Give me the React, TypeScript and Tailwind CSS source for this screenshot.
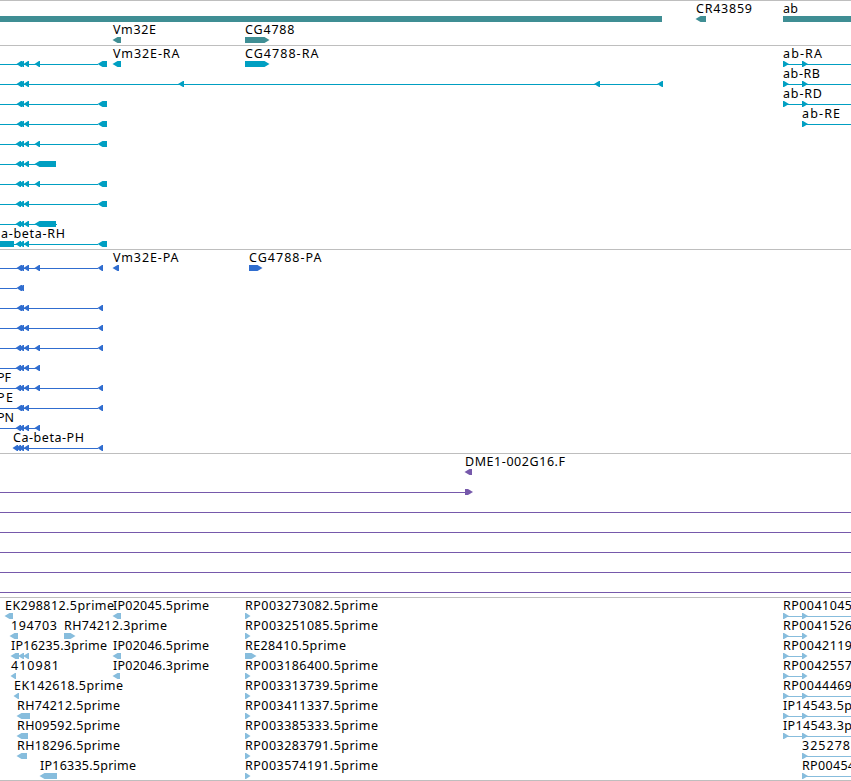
type Dir = 'l' | 'r' | 'box'

// start, end, direction
type Shape = [number, number, Dir]

interface Feature {
  lane: number
  label?: string
  labelX?: number
  labelWidth?: number
  line?: [number, number]
  shapes?: Shape[]
}

interface TrackData {
  name: string
  color: string
  height: number
  pitch?: number
  features: Feature[]
}

const WIDTH = 851

const NEAR: Shape[] = [[16.5, 22, 'l'], [18.5, 24, 'l'], [23.5, 29, 'l']]
const FAR: Shape[] = [[15.5, 21, 'l'], [18.5, 24, 'l'], [23.5, 29, 'l']]
const EXON: Shape = [34.5, 40, 'l']
const LONG_EXON: Shape = [34.5, 56, 'l']
const RNA_END: Shape = [97.5, 107, 'l']
const CDS_END: Shape = [97.5, 103, 'l']
const AB: Shape[] = [[783, 789, 'r'], [802, 808, 'r']]

const TRACKS: TrackData[] = [
  {
    name: 'genes',
    color: '#3f8e94',
    height: 44,
    pitch: 21,
    features: [
      { lane: 0, shapes: [[0, 662, 'box']] },
      { lane: 0, label: 'CR43859', labelX: 696, labelWidth: 56, shapes: [[695.5, 706, 'l']] },
      { lane: 0, label: 'ab', labelX: 783, labelWidth: 15, shapes: [[783, 851, 'box']] },
      { lane: 1, label: 'Vm32E', labelX: 113, labelWidth: 43, shapes: [[112.5, 121, 'l']] },
      { lane: 1, label: 'CG4788', labelX: 245, labelWidth: 49.5, shapes: [[245, 269.5, 'r']] },
    ],
  },
  {
    name: 'transcripts',
    color: '#009fc2',
    height: 203,
    features: [
      { lane: 0, line: [0, 98], shapes: [...NEAR, EXON, RNA_END] },
      { lane: 0, label: 'Vm32E-RA', labelX: 113, labelWidth: 66.5, shapes: [[112.5, 121, 'l']] },
      { lane: 0, label: 'CG4788-RA', labelX: 245, labelWidth: 73.5, shapes: [[245, 269.5, 'r']] },
      { lane: 0, label: 'ab-RA', labelX: 783, labelWidth: 39, line: [783, 851], shapes: AB },
      { lane: 1, line: [0, 658], shapes: [...NEAR, [178, 184, 'l'], [594, 600, 'l'], [657, 663, 'l']] },
      { lane: 1, label: 'ab-RB', labelX: 783, labelWidth: 37, line: [783, 851], shapes: AB },
      { lane: 2, line: [0, 98], shapes: [...NEAR, RNA_END] },
      { lane: 2, label: 'ab-RD', labelX: 783, labelWidth: 39, line: [783, 851], shapes: AB },
      { lane: 3, line: [0, 98], shapes: [...NEAR, RNA_END] },
      { lane: 3, label: 'ab-RE', labelX: 802, labelWidth: 38, line: [802, 851], shapes: [[802, 808, 'r']] },
      { lane: 4, line: [0, 98], shapes: [...FAR, EXON, RNA_END] },
      { lane: 5, line: [0, 36], shapes: [...FAR, LONG_EXON] },
      { lane: 6, line: [0, 98], shapes: [...FAR, EXON, RNA_END] },
      { lane: 7, line: [0, 98], shapes: [...FAR, RNA_END] },
      { lane: 8, line: [0, 57], shapes: [...FAR, LONG_EXON] },
      { lane: 9, label: 'a-beta-RH', labelX: 1, labelWidth: 64, line: [0, 98], shapes: [[0, 14, 'box'], ...FAR, RNA_END] },
    ],
  },
  {
    name: 'proteins',
    color: '#306dcf',
    height: 203,
    features: [
      { lane: 0, line: [0, 98], shapes: [...NEAR, EXON, CDS_END] },
      { lane: 0, label: 'Vm32E-PA', labelX: 113, labelWidth: 65.5, shapes: [[112.5, 119, 'l']] },
      { lane: 0, label: 'CG4788-PA', labelX: 249, labelWidth: 72.5, shapes: [[249, 262.5, 'r']] },
      { lane: 1, line: [0, 17], shapes: [[16.5, 22, 'l'], [18.5, 24, 'l']] },
      { lane: 2, line: [0, 98], shapes: [...NEAR, CDS_END] },
      { lane: 3, line: [0, 98], shapes: [...NEAR, CDS_END] },
      { lane: 4, line: [0, 98], shapes: [...FAR, EXON, CDS_END] },
      { lane: 5, line: [0, 36], shapes: [...FAR, EXON] },
      { lane: 6, label: 'PF', labelX: -3, labelWidth: 14, line: [0, 98], shapes: [...FAR, EXON, CDS_END] },
      { lane: 7, label: 'PE', labelX: -3, labelWidth: 16, line: [0, 98], shapes: [...NEAR, CDS_END] },
      { lane: 8, label: 'PN', labelX: -3, labelWidth: 17, line: [0, 36], shapes: [...FAR, EXON] },
      { lane: 9, label: 'Ca-beta-PH', labelX: 13, labelWidth: 71, line: [16, 98], shapes: [[12.5, 18, 'l'], ...FAR, CDS_END] },
    ],
  },
  {
    name: 'bac ends',
    color: '#7659ab',
    height: 143,
    features: [
      { lane: 0, label: 'DME1-002G16.F', labelX: 465, labelWidth: 100, shapes: [[464.5, 472, 'l']] },
      { lane: 1, line: [0, 466], shapes: [[465, 473, 'r']] },
      { lane: 2, line: [0, 851] },
      { lane: 3, line: [0, 851] },
      { lane: 4, line: [0, 851] },
      { lane: 5, line: [0, 851] },
      { lane: 6, line: [0, 851] },
    ],
  },
  {
    name: 'ests',
    color: '#87bddd',
    height: 182,
    features: [
      { lane: 0, label: 'EK298812.5prime', labelX: 5, labelWidth: 109, shapes: [[4.5, 13, 'l']] },
      { lane: 0, label: 'IP02045.5prime', labelX: 113, labelWidth: 96, shapes: [[112.5, 121, 'l']] },
      { lane: 1, label: '194703', labelX: 11, labelWidth: 46, shapes: [[9.5, 18, 'l']] },
      { lane: 1, label: 'RH74212.3prime', labelX: 64, labelWidth: 103, shapes: [[64, 75.5, 'r']] },
      { lane: 2, label: 'IP16235.3prime', labelX: 11, labelWidth: 96, shapes: [[10.5, 19, 'l'], [18, 24, 'l'], [23, 29, 'l']] },
      { lane: 2, label: 'IP02046.5prime', labelX: 113, labelWidth: 96, shapes: [[112.5, 121, 'l']] },
      { lane: 3, label: '410981', labelX: 11, labelWidth: 48, shapes: [[10.5, 16, 'l']] },
      { lane: 3, label: 'IP02046.3prime', labelX: 113, labelWidth: 96, shapes: [[112.5, 120, 'l']] },
      { lane: 4, label: 'EK142618.5prime', labelX: 14, labelWidth: 109, shapes: [[13.5, 19, 'l']] },
      { lane: 5, label: 'RH74212.5prime', labelX: 17, labelWidth: 103, shapes: [[16.5, 30, 'l']] },
      { lane: 6, label: 'RH09592.5prime', labelX: 17, labelWidth: 103, shapes: [[16.5, 28, 'l']] },
      { lane: 7, label: 'RH18296.5prime', labelX: 17, labelWidth: 103, shapes: [[16.5, 27, 'l']] },
      { lane: 8, label: 'IP16335.5prime', labelX: 40, labelWidth: 96, shapes: [[39.5, 57, 'l']] },

      { lane: 0, label: 'RP003273082.5prime', labelX: 245, labelWidth: 133, shapes: [[245, 250.5, 'r']] },
      { lane: 1, label: 'RP003251085.5prime', labelX: 245, labelWidth: 133, shapes: [[245, 250.5, 'r']] },
      { lane: 2, label: 'RE28410.5prime', labelX: 245, labelWidth: 101, shapes: [[245, 256.5, 'r']] },
      { lane: 3, label: 'RP003186400.5prime', labelX: 245, labelWidth: 133, shapes: [[245, 250.5, 'r']] },
      { lane: 4, label: 'RP003313739.5prime', labelX: 245, labelWidth: 133, shapes: [[245, 250.5, 'r']] },
      { lane: 5, label: 'RP003411337.5prime', labelX: 245, labelWidth: 133, shapes: [[245, 250.5, 'r']] },
      { lane: 6, label: 'RP003385333.5prime', labelX: 245, labelWidth: 133, shapes: [[245, 250.5, 'r']] },
      { lane: 7, label: 'RP003283791.5prime', labelX: 245, labelWidth: 133, shapes: [[245, 250.5, 'r']] },
      { lane: 8, label: 'RP003574191.5prime', labelX: 245, labelWidth: 133, shapes: [[245, 250.5, 'r']] },

      { lane: 0, label: 'RP0041045', labelX: 783, labelWidth: 69, line: [783, 851], shapes: AB },
      { lane: 1, label: 'RP0041526', labelX: 783, labelWidth: 69, line: [783, 803], shapes: [[783, 789, 'r'], [802, 807.5, 'r']] },
      { lane: 2, label: 'RP0042119', labelX: 783, labelWidth: 69, line: [783, 803], shapes: [[783, 789, 'r'], [802, 807.5, 'r']] },
      { lane: 3, label: 'RP0042557', labelX: 783, labelWidth: 69, line: [783, 803], shapes: [[783, 789, 'r'], [802, 807.5, 'r']] },
      { lane: 4, label: 'RP0044469', labelX: 783, labelWidth: 69, line: [783, 851], shapes: AB },
      { lane: 5, label: 'IP14543.5p', labelX: 783, labelWidth: 69, line: [783, 851], shapes: AB },
      { lane: 6, label: 'IP14543.3p', labelX: 783, labelWidth: 69, line: [783, 851], shapes: AB },
      { lane: 7, label: '325278', labelX: 802, labelWidth: 48, line: [802, 851], shapes: [[802, 808, 'r']] },
      { lane: 8, label: 'RP00454', labelX: 802, labelWidth: 53, line: [802, 851], shapes: [[802, 808, 'r']] },
    ],
  },
]

function shapePoints([start, end, dir]: Shape, mid: number) {
  const top = mid - 3
  const bottom = mid + 3
  // keep a one pixel flat base on the shortest arrows
  const head = Math.min(5, end - start - 1)
  if (dir === 'l') {
    return `${start},${mid} ${start + head},${top} ${end},${top} ${end},${bottom} ${start + head},${bottom}`
  }
  if (dir === 'r') {
    return `${start},${top} ${end - head},${top} ${end},${mid} ${end - head},${bottom} ${start},${bottom}`
  }
  return `${start},${top} ${end},${top} ${end},${bottom} ${start},${bottom}`
}

function FeatureGlyph({ feature, color, pitch }: { feature: Feature; color: string; pitch: number }) {
  const { lane, label, labelX = 0, labelWidth, line, shapes = [] } = feature
  const mid = 18 + lane * pitch
  return (
    <g>
      {line && <rect x={line[0]} y={mid} width={line[1] - line[0]} height={1} fill={color} />}
      {shapes.map((s, i) => <polygon key={i} points={shapePoints(s, mid)} fill={color} />)}
      {label && (
        <text x={labelX} y={mid - 6} textLength={labelWidth} className="fill-black">{label}</text>
      )}
    </g>
  )
}

function Track({ track }: { track: TrackData }) {
  return (
    <section className="border-t border-[#bebebe]">
      <svg width={WIDTH} height={track.height} className="block overflow-hidden text-[12.5px]" aria-label={track.name}>
        {track.features.map((f, i) => (
          <FeatureGlyph key={i} feature={f} color={track.color} pitch={track.pitch ?? 20} />
        ))}
      </svg>
    </section>
  )
}

export default function App() {
  return (
    <main className="w-[851px] h-[781px] overflow-hidden bg-white border-b border-[#bebebe] font-['Noto_Sans',sans-serif]">
      {TRACKS.map(t => <Track key={t.name} track={t} />)}
    </main>
  )
}
